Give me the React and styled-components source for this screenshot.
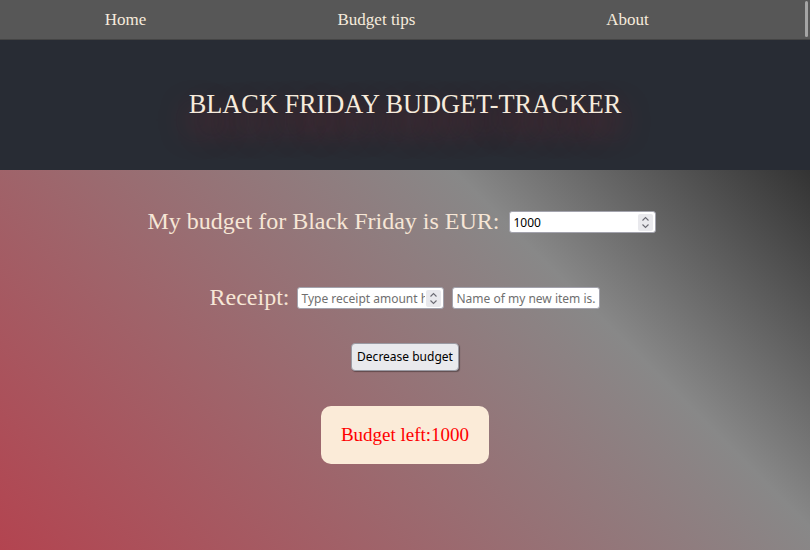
import React, { useState } from 'react';
import styled, { createGlobalStyle } from 'styled-components';

const GlobalStyle = createGlobalStyle`
  html, body {
    margin: 0;
    padding: 0;
    height: 100%;
    overflow: hidden;
  }
  body {
    font-family: "Liberation Serif", "Times New Roman", serif;
  }
`;

const Page = styled.div`
  display: flex;
  flex-direction: column;
  height: 550px;
`;

const Nav = styled.nav`
  position: relative;
  box-sizing: border-box;
  height: 40px;
  padding-top: 1px;
  background-color: #575757;
  border-bottom: 1px solid #454545;
  display: grid;
  grid-template-columns: repeat(3, 1fr);
  align-items: center;
  padding-right: 57px;
`;

const NavLink = styled.a`
  justify-self: center;
  color: #f6ebdc;
  font-size: 17px;
  text-decoration: none;
  cursor: pointer;
`;

// thin scrollbar thumb visible at the top right of the page
const ScrollThumb = styled.span`
  position: absolute;
  top: 1px;
  right: 2px;
  width: 3px;
  height: 36px;
  border-radius: 2px;
  background-color: #a5a5a5;
`;

const Header = styled.header`
  height: 130px;
  background-color: #282c34;
  display: flex;
  align-items: center;
  justify-content: center;
`;

const Title = styled.h1`
  margin: 0;
  font-size: 26.3px;
  font-weight: normal;
  color: #f6ebdc;
  text-shadow: 0 16px 30px rgba(190, 40, 50, 0.7);
`;

const Main = styled.main`
  flex: 1;
  display: flex;
  flex-direction: column;
  align-items: center;
  padding-top: 37px;
  background: linear-gradient(45deg, #b34450 0%, #888888 70%, #333333 100%);
`;

const Row = styled.div`
  display: flex;
  align-items: center;
  gap: ${(p) => p.$gap || 8}px;
  padding-right: ${(p) => p.$shift || 0}px;
  margin-bottom: ${(p) => p.$after || 0}px;
`;

const Label = styled.label`
  font-size: 24px;
  line-height: 28px;
  color: #f6e6d6;
`;

const Field = styled.div`
  box-sizing: border-box;
  display: flex;
  align-items: center;
  width: ${(p) => p.$width || 147}px;
  height: 22px;
  padding: 0 2px;
  margin-top: 2px;
  background-color: #ffffff;
  border: 1px solid #a3a3ad;
  border-radius: 3px;
`;

const FieldInput = styled.input`
  flex: 1;
  min-width: 0;
  height: 18px;
  padding: 0 1px;
  border: none;
  outline: none;
  background: transparent;
  font-family: "Noto Sans", "Open Sans", sans-serif;
  font-size: 12px;
  color: #000000;

  &::placeholder {
    color: #6f6f6f;
  }
`;

const Spinner = styled.div`
  flex: none;
  width: 15px;
  height: 17px;
  border-radius: 2px;
  background-color: #e9e9ed;
  display: flex;
  align-items: center;
  justify-content: center;
`;

const Button = styled.button`
  padding: 5px 5px;
  font-family: "Noto Sans", "Open Sans", sans-serif;
  font-size: 12px;
  line-height: 16px;
  color: #000000;
  background-color: #e9e9ed;
  border: 1px solid #9a9aa3;
  border-radius: 4px;
  box-shadow: 1px 1px 1px rgba(0, 0, 0, 0.35);
  cursor: pointer;
`;

const BudgetBox = styled.div`
  margin-top: 35px;
  padding: 18px 20px;
  border-radius: 10px;
  background-color: #fbebd8;
  color: #ff0000;
  font-size: 19px;
  line-height: 22px;
`;

const SpinIcon = () => (
  <svg width="9" height="13" viewBox="0 0 9 13" fill="none" stroke="#6b6b73" strokeWidth="1.1">
    <polyline points="1.5,4.5 4.5,1.5 7.5,4.5" />
    <polyline points="1.5,8.5 4.5,11.5 7.5,8.5" />
  </svg>
);

const NumberField = ({ value, onChange, placeholder }) => (
  <Field>
    <FieldInput type="text" inputMode="numeric" value={value} onChange={onChange} placeholder={placeholder} />
    <Spinner>
      <SpinIcon />
    </Spinner>
  </Field>
);

export default function App() {
  const [budget, setBudget] = useState('1000');
  const [left, setLeft] = useState(1000);
  const [amount, setAmount] = useState('');
  const [item, setItem] = useState('');

  const decrease = () => {
    const n = Number(amount);
    if (!Number.isNaN(n)) setLeft(left - n);
  };

  return (
    <Page>
      <GlobalStyle />
      <Nav>
        <NavLink>Home</NavLink>
        <NavLink>Budget tips</NavLink>
        <NavLink>About</NavLink>
        <ScrollThumb />
      </Nav>
      <Header>
        <Title>BLACK FRIDAY BUDGET-TRACKER</Title>
      </Header>
      <Main>
        <Row $gap={10} $shift={6} $after={48}>
          <Label>My budget for Black Friday is EUR:</Label>
          <NumberField
            value={budget}
            onChange={(e) => {
              setBudget(e.target.value);
              setLeft(Number(e.target.value));
            }}
          />
        </Row>
        <Row $after={32}>
          <Label>Receipt:</Label>
          <NumberField
            placeholder="Type receipt amount here"
            value={amount}
            onChange={(e) => setAmount(e.target.value)}
          />
          <Field $width={148}>
            <FieldInput
              type="text"
              placeholder="Name of my new item is..."
              value={item}
              onChange={(e) => setItem(e.target.value)}
            />
          </Field>
        </Row>
        <Button onClick={decrease}>Decrease budget</Button>
        <BudgetBox>Budget left:{left}</BudgetBox>
      </Main>
    </Page>
  );
}
